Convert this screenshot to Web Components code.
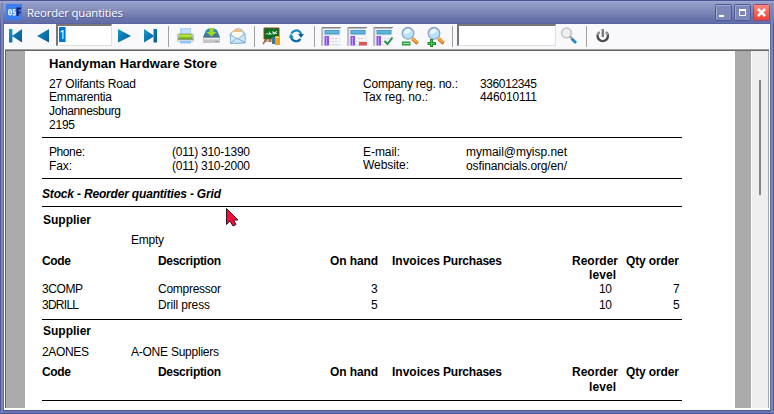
<!DOCTYPE html>
<html lang="en"><head><meta charset="utf-8"><title>Reorder quantities</title>
<style>html,body{margin:0;width:774px;height:414px;overflow:hidden;background:#626ca8}</style></head><body>
<report-window></report-window>
<script>
class FitText extends HTMLElement{
 constructor(){super();this.attachShadow({mode:'open'}).innerHTML=`<style>:host{display:block;flex:none;white-space:pre;height:14px;line-height:14px}span{display:inline-block}</style><span><slot></slot></span>`}
 connectedCallback(){
  const w=+this.getAttribute('w'),s=this.shadowRoot.firstElementChild.nextElementSibling;
  this.style.marginLeft=(this.getAttribute('g')||0)+'px';
  this.style.marginTop=(this.getAttribute('d')||0)+'px';
  const n=this.textContent.length,nat=s.getBoundingClientRect().width;
  if(n>1)s.style.letterSpacing=((w-nat)/(n-1))+'px';
  this.style.width=w+'px';
 }}
class ReportRow extends HTMLElement{
 constructor(){super();this.attachShadow({mode:'open'}).innerHTML=`<style>:host{display:flex;align-items:flex-start;flex:none;box-sizing:border-box}:host([b]){font-weight:bold}:host([i]){font-style:italic}:host([t]){font-size:13px}</style><slot></slot>`}
 connectedCallback(){this.style.height=this.getAttribute('h')+'px'}}
class ReportRule extends HTMLElement{
 constructor(){super();this.attachShadow({mode:'open'}).innerHTML=`<style>:host{display:block;flex:none;height:1px;width:640px;background:#000;margin-left:17px}</style>`}
 connectedCallback(){this.style.marginBottom=this.getAttribute('after')+'px'}}
class ReportPage extends HTMLElement{
 constructor(){super();this.attachShadow({mode:'open'}).innerHTML=`<style>:host{display:flex;flex-direction:column;width:710px;height:357px;overflow:hidden;background:#fff;color:#000;font:12px "Liberation Sans",Arial,sans-serif;box-sizing:border-box;padding-top:6px}</style>
<report-row h="20" b t><fit-text g="24" w="168">Handyman Hardware Store</fit-text></report-row>
<report-row h="13"><fit-text g="24" w="87">27 Olifants Road</fit-text><fit-text g="227" w="95">Company reg. no.:</fit-text><fit-text g="22" w="57">336012345</fit-text></report-row>
<report-row h="14"><fit-text g="24" w="63">Emmarentia</fit-text><fit-text g="251" w="65">Tax reg. no.:</fit-text><fit-text g="52" w="57">446010111</fit-text></report-row>
<report-row h="14"><fit-text g="24" w="72">Johannesburg</fit-text></report-row>
<report-row h="19"><fit-text g="24" w="26">2195</fit-text></report-row>
<report-rule after="7"></report-rule>
<report-row h="14"><fit-text g="24" w="36">Phone:</fit-text><fit-text g="87" w="78">(011) 310-1390</fit-text><fit-text g="113" w="37">E-mail:</fit-text><fit-text g="66" w="101">mymail@myisp.net</fit-text></report-row>
<report-row h="19"><fit-text g="24" w="23">Fax:</fit-text><fit-text g="100" w="78">(011) 310-2000</fit-text><fit-text g="113" d="-1" w="46">Website:</fit-text><fit-text g="57" w="101">osfinancials.org/en/</fit-text></report-row>
<report-rule after="8"></report-rule>
<report-row h="19" b i><fit-text g="17" w="179">Stock - Reorder quantities - Grid</fit-text></report-row>
<report-rule after="6"></report-rule>
<report-row h="20" b><fit-text g="18" w="48">Supplier</fit-text></report-row>
<report-row h="21"><fit-text g="106" w="33">Empty</fit-text></report-row>
${ReportPage.head(28,14)}
<report-row h="16"><fit-text g="17" w="41">3COMP</fit-text><fit-text g="75" w="63">Compressor</fit-text><fit-text g="150" w="7">3</fit-text><fit-text g="221" w="13">10</fit-text><fit-text g="61" w="7">7</fit-text></report-row>
<report-row h="21"><fit-text g="17" w="37">3DRILL</fit-text><fit-text g="79" w="52">Drill press</fit-text><fit-text g="161" w="7">5</fit-text><fit-text g="221" w="13">10</fit-text><fit-text g="61" w="7">5</fit-text></report-row>
<report-rule after="4"></report-rule>
<report-row h="21" b><fit-text g="18" w="48">Supplier</fit-text></report-row>
<report-row h="20"><fit-text g="17" w="47">2AONES</fit-text><fit-text g="42" w="88">A-ONE Suppliers</fit-text></report-row>
${ReportPage.head(35,15)}
<report-rule after="0"></report-rule>`}
 static head(h,d){return `<report-row h="${h}" b><fit-text g="17" w="29">Code</fit-text><fit-text g="87" w="63">Description</fit-text><fit-text g="109" w="48">On hand</fit-text><fit-text g="14" w="48">Invoices</fit-text><fit-text g="3" w="59">Purchases</fit-text><fit-text g="70" w="46">Reorder</fit-text><fit-text g="-29" d="${d}" w="27">level</fit-text><fit-text g="10" w="53">Qty order</fit-text></report-row>`}}
class ToolIcon extends HTMLElement{
 constructor(){super();this.attachShadow({mode:'open'})}
 connectedCallback(){const x=+this.getAttribute('x'),w=+this.getAttribute('w');
 this.shadowRoot.innerHTML=`<style>:host{display:block;flex:none;height:25px;width:${w}px}svg{display:block}</style><svg width="${w}" height="25" viewBox="${x} 24 ${w} 25">${ToolIcon.art[this.getAttribute('name')]}</svg>`}}
const blue='<linearGradient id="b" x1="0" y1="0" x2="1" y2="1"><stop stop-color="#17a0c8"/><stop offset=".5" stop-color="#0c75b0"/><stop offset="1" stop-color="#075a92"/></linearGradient>';
const grid=x=>`<path d="M${x} 46V27.5H${x+19}" fill="none" stroke="#858585"/><path d="M${x+1} 45V28.5H${x+18}" fill="none" stroke="#bbb"/><path d="M${x+1.5} 29H${x+18.5}V46H${x+1.5}Z" fill="#eceef5"/><path d="M${x+2.5} 30h15v4.5h-15z" fill="#4aa1cf"/><path d="M${x+4} 32h12" stroke="#82c7e5"/><path d="M${x+2.5} 36h4.5v9.5h-4.5z" fill="#8c50ef"/><path d="M${x+4.5} 37v8" stroke="#bc9cf8"/><path d="M${x+8} 36h9v9h-9z" fill="#fff"/><path d="M${x+8} 38.5h9m-9 3h9m-9 3h9m-6-8v9m3-9v9" stroke="#dddee8"/>`;
const lens=(x,g)=>`<path d="m${x+11.5} 38.500 5 5" stroke="#cf6a22" stroke-width="3.600"/><path d="m${x+11.5} 38 4.500 4.500" stroke="#fbab3c" stroke-width="2.200"/><circle cx="${x+7}" cy="33.300" r="5.800" fill="#b8e1fb" stroke="#8fa3c6" stroke-width="1.300"/><path d="M${x+3} 33q1-4 5-4l2 2q-4 4-7 2" fill="#edfaff"/>${g}`;
ToolIcon.art={
first:blue+'<path d="M9 29h3.400v13.500H9zM22 29v13.500L12 36z" fill="url(#b)"/>',
prev:blue+'<path d="M49 29v13.500L37 36z" fill="url(#b)"/>',
next:blue+'<path d="M118 29v13.500L131 36z" fill="url(#b)"/>',
last:blue+'<path d="M153.500 29h3.500v13.500h-3.500zM144 29v13.500L154.500 36z" fill="url(#b)"/>',
print:'<path d="M180 28h11v7h-11z" fill="#a9d3fa"/><path d="M182 29h8v5h-8z" fill="#c0e0fc"/><path d="M179 33h13l2 2v6h-17v-6z" fill="#bfc1c7"/><path d="M179 34h13v5h-13z" fill="#88c51c"/><path d="M179 35h13v1.500h-13z" fill="#b9e65a"/><path d="M178 38.500h15v1h-15z" fill="#5c8b27"/><path d="M177 40h17v2h-17z" fill="#d6d8dd"/><path d="M180 41h11v2.500h-11z" fill="#8fc5f3"/>',
save:'<path d="M206 30q5-4 11 0l3 7H203z" fill="#358bb4"/><path d="M205 34l-2 4h17l-2-4z" fill="#47758c"/><path d="M203 37.500h17v5.500h-17z" fill="#c4c5c9"/><path d="M204 38h15v1.500h-15z" fill="#e9e9ec"/><path d="M215 41.500h3" stroke="#999"/><path d="M209.500 28h4v4h3l-5 4.500-5-4.500h3z" fill="#9bdd1d"/>',
mail:'<path d="m230 34 6-5q3-1 6 1l3 4v9l-14 .5z" fill="#b7d7ef" stroke="#8eb2d6"/><path d="m232 33 4-4 5 1 2 4-5 5-6-4z" fill="#fff8e9"/><path d="m232 32 4-3.500 5 1.500 1 2z" fill="#efbc79"/><path d="m230.500 35 7 4 7.500-5v8.500l-14.500 1z" fill="#cceafa" stroke="#84add7" stroke-width=".7"/><path d="m231 43 6-5 8 4.500" fill="none" stroke="#7ca7d2"/>',
board:'<path d="M267 38l-4 6m11-6 3 6m-7-6v4" stroke="#9b6b33" stroke-width="1.500"/><path d="M264 28h15v11h-15z" fill="#077023" stroke="#884d1b"/><path d="m266 34.500 1.500-1.500 1 2m1-.5v-3m0 2h1.500v1.500m2-4v3h1.500v-1.500h-1.500m4-1-1.500.5v1.500h1.500" fill="none" stroke="#e9f5e7" stroke-width=".9"/><path d="M272 37h4v7h-4z" fill="#3178a0"/><path d="M275 36h5v9h-5z" fill="#efa31a"/><path d="M276 37h3v1h-3z" fill="#ffe18b"/><path d="M264 41h9" stroke="#94632f"/>',
refresh:'<path d="M291.500 33.500a5.300 5.300 0 0 1 8.500-1.500q1.200 1.300 1.300 3" fill="none" stroke="#1784b5" stroke-width="2.200"/><path d="M298 34h6l-3 4z" fill="#08659f"/><path d="M300.500 39a5.300 5.300 0 0 1-9.500-2" fill="none" stroke="#096aa5" stroke-width="2.200"/><path d="M288.500 37.500h5.500l-3-4z" fill="#1c99c3"/>',
g1:grid(322),g2:grid(348)+'<path d="M359 42h8v3.500h-8z" fill="#dc5558"/>',g3:grid(374)+'<path d="M384 39h9v6h-9z" fill="#f4f4f8"/><path d="m384.500 41 3 3 5-6.500" fill="none" stroke="#269344" stroke-width="2"/>',
out:lens(401,'<path d="M402 41.500h8.500v4H402z" fill="#24963b"/><path d="M403 43.500h6.500" stroke="#a6e4aa" stroke-width="1.200"/>'),
in:lens(427,'<path d="M430 39h3v3h3v3h-3v2h-3v-2h-2.500v-3h2.500z" fill="#218e33"/><path d="M431.500 40v6m-3-2.500h6.500" stroke="#49c45b"/>'),
search:'<path d="m571.500 38.500 4.500 4.500" stroke="#2b8cbb" stroke-width="3"/><circle cx="566.500" cy="33" r="4.900" fill="#efefef" stroke="#c8c8ca" stroke-width="1.800"/><path d="m570 36.500 2 2" stroke="#999" stroke-width="2"/>',
power:'<path d="M599 32.500a5.100 5.100 0 1 0 7.500 0" fill="none" stroke="#4b4b4d" stroke-width="2.500"/><path d="M597.800 35q0-2 2-3M605.500 32q2 1 2 3" fill="none" stroke="#999" stroke-width="2.300"/><path d="M602.800 29v8" stroke="#777" stroke-width="2.300"/>'
};
class ToolSep extends HTMLElement{constructor(){super();this.attachShadow({mode:'open'}).innerHTML='<style>:host{display:block;flex:none;width:1px;height:21px;margin-top:2px;background:#a0a0a0}</style>'}}
class ToolField extends HTMLElement{
 constructor(){super();this.attachShadow({mode:'open'}).innerHTML=`<style>:host{display:block;flex:none;box-sizing:border-box;height:22px;background:#fff;border-style:solid;border-width:2px 1px 1px 2px;border-color:#777 #dedee3 #dedee3 #777;font:12px "Open Sans",sans-serif;color:#fff;line-height:15px;padding:1px 0 0 1px}::slotted(b){display:inline-block;width:6px;height:15px;background:#0078d7;border-right:1px solid #f18b4b;font-weight:400}</style><slot></slot>`}
 connectedCallback(){this.style.width=this.getAttribute('w')+'px'}}
class ToolBar extends HTMLElement{
 constructor(){super();const i=(n,x,w)=>`<tool-icon name="${n}" x="${x}" w="${w}"></tool-icon>`,s='<tool-sep></tool-sep>';
 this.attachShadow({mode:'open'}).innerHTML=`<style>:host{display:flex;height:25px;background:#f9f9fc;padding-left:1px;box-sizing:border-box}tool-field{margin-top:0}</style>${i('first',5,25)}${i('prev',30,26)}<tool-field w="56"><b>1</b></tool-field>${i('next',112,26)}${i('last',138,30)}${s}${i('print',169,30)}${i('save',199,26)}${i('mail',225,29)}${s}${i('board',255,29)}${i('refresh',284,30)}${s}${i('g1',315,30)}${i('g2',345,26)}${i('g3',371,26)}${i('out',397,26)}${i('in',423,29)}${s}<tool-field w="99" style="margin-left:4px"></tool-field>${i('search',556,30)}${s}${i('power',587,30)}`}}
class TitleBar extends HTMLElement{
 constructor(){super();this.attachShadow({mode:'open'}).innerHTML=`<style>:host{display:flex;height:24px;box-sizing:border-box;border-top:1px solid #4d5698;background:linear-gradient(#a3acd3 0,#949dc7 2px,#8791bd 8px,#6872aa 18px,#626ca7 22px,#555e9f);padding:3px 4px 0 6px;color:#fff}
 .logo{width:16px;height:16px;flex:none}.name{font:11.5px "Open Sans",sans-serif;line-height:16px;margin-left:5px;flex:1;text-shadow:1px 1px 1px #4e5893}.name fit-text{height:17px;line-height:17px}
 .buttons{display:flex;gap:2px}svg{display:block}</style>
 <svg class="logo" viewBox="0 0 16 16"><path d="M0 0h16v16H0z" fill="#3b7df0"/><rect x="2.800" y="5.800" width="2.400" height="5" rx="1" fill="none" stroke="#dce9ff" stroke-width="1.600"/><path d="M9.500 5.800H7.500v2.400h1.500v2.600H6.500" fill="none" stroke="#dce9ff" stroke-width="1.500"/><path d="M11.500 12V4.500H15m-3.500 4H14.500" fill="none" stroke="#101e62" stroke-width="2"/></svg>
 <div class="name"><fit-text w="96">Reorder quantities</fit-text></div>
 <div class="buttons">
 <svg width="17" height="17"><rect x=".5" y=".5" width="16" height="16" rx="1" fill="#7e88b8" stroke="#4c5798"/><path d="M1.500 15V1.500h14" fill="none" stroke="#a3acd0"/><path d="M4 11h5v2H4z" fill="#fff"/></svg>
 <svg width="17" height="17"><rect x=".5" y=".5" width="16" height="16" rx="1" fill="#7e88b8" stroke="#4c5798"/><path d="M1.500 15V1.500h14" fill="none" stroke="#a3acd0"/><path d="M5.500 6h6v5.500h-6z" fill="none" stroke="#fff"/><path d="M5 6h7" stroke="#fff" stroke-width="2"/></svg>
 <svg width="17" height="17"><linearGradient id="r" x2="0" y2="1"><stop stop-color="#ff8c83"/><stop offset="1" stop-color="#e93e32"/></linearGradient><rect x=".5" y=".5" width="16" height="16" rx="1" fill="url(#r)" stroke="#8d4a78"/><path d="m5 5 7 7m0-7-7 7" stroke="#fff" stroke-width="2.500"/></svg></div>`}}
class ReportWindow extends HTMLElement{
 constructor(){super();this.attachShadow({mode:'open'}).innerHTML=`<style>:host{display:block;position:relative;width:774px;height:414px;overflow:hidden;background:#626ca8;box-shadow:inset 1px 0 #4e5797,inset -1px 0 #4e5797}
 .body{margin:0 4px;background:#fff;height:386px}.view{display:flex;height:359px;box-sizing:border-box;margin-left:1px;margin-right:1px;border-top:1px solid #a0a0a0;border-bottom:1px solid #e1e1e4}
 .in{display:flex;border-top:1px solid #666;border-left:1px solid #666;box-sizing:border-box;width:764px;height:358px;background:#ababab;padding-left:19px;overflow:hidden}
 .bar{margin-left:16px;width:17px;box-sizing:border-box;border-left:1px solid #fff;background:#efefef;padding:29px 0 0 7px;flex:none}.thumb{width:2px;height:115px;background:#858585}
 report-page{flex:none}.cursor{position:absolute;left:225px;top:207px}
 .edge{height:4px;background:linear-gradient(#4d5797 0 1px,#6b76b0 1px 3px,#4d5797 3px)}
 .rail{position:absolute;top:3px;bottom:1px;width:2px;background:#7984b8;left:1px}.rail.right{left:771px}</style>
 <title-bar></title-bar><div class="body"><tool-bar></tool-bar><div class="view"><div class="in"><report-page></report-page><div class="bar"><div class="thumb"></div></div></div></div></div><div class="edge"></div><div class="rail"></div><div class="rail right"></div>
 <svg class="cursor" width="15" height="20"><path d="M1.500 1.500v16l3.500-3.500 3 5 3-1.500-2.500-4.500H13z" fill="#f90c3d" stroke="#32121e"/></svg>`}}
for(const [n,c] of Object.entries({'fit-text':FitText,'report-row':ReportRow,'report-rule':ReportRule,'report-page':ReportPage,'tool-icon':ToolIcon,'tool-sep':ToolSep,'tool-field':ToolField,'tool-bar':ToolBar,'title-bar':TitleBar,'report-window':ReportWindow}))customElements.define(n,c);
</script></body></html>
